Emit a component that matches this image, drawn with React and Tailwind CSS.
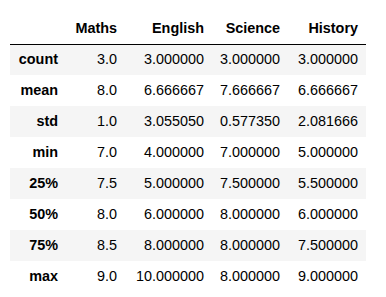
const columns = ["Maths", "English", "Science", "History"];

const rows = [
  ["count", "3.0", "3.000000", "3.000000", "3.000000"],
  ["mean", "8.0", "6.666667", "7.666667", "6.666667"],
  ["std", "1.0", "3.055050", "0.577350", "2.081666"],
  ["min", "7.0", "4.000000", "7.000000", "5.000000"],
  ["25%", "7.5", "5.000000", "7.500000", "5.500000"],
  ["50%", "8.0", "6.000000", "8.000000", "6.000000"],
  ["75%", "8.5", "8.000000", "8.000000", "7.500000"],
  ["max", "9.0", "10.000000", "8.000000", "9.000000"],
];

const widths = ["w-[56px]", "w-[59px]", "w-[87px]", "w-[76px]", "w-[78px]"];

export default function App() {
  return (
    <div className="min-h-[297px] w-[386px] bg-white pl-[10px] pt-[15px] font-['Liberation_Sans',Arial,sans-serif] text-[14.4px] text-black">
      <table className="table-fixed border-collapse">
        <thead>
          <tr className="h-[29px] border-b border-black">
            <th className={`${widths[0]} px-[8px]`}></th>
            {columns.map((c, i) => (
              <th key={c} className={`${widths[i + 1]} px-[8px] text-right font-bold`}>
                {c}
              </th>
            ))}
          </tr>
        </thead>
        <tbody>
          {rows.map((r, i) => (
            <tr key={r[0]} className={`h-[31px] ${i % 2 === 0 ? "bg-[#f5f5f5]" : "bg-white"}`}>
              <th className="px-[8px] text-right font-bold">{r[0]}</th>
              {r.slice(1).map((v, j) => (
                <td key={j} className="px-[8px] text-right">
                  {v}
                </td>
              ))}
            </tr>
          ))}
        </tbody>
      </table>
    </div>
  );
}
